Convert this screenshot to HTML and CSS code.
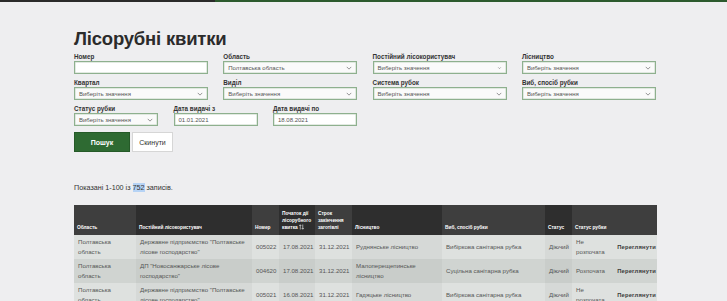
FILE: index.html
```html
<!DOCTYPE html>
<html lang="uk">
<head>
<meta charset="utf-8">
<link rel="stylesheet" href="styles.css">
</head>
<body>
<div class="topbar"><div class="topbar-dark"></div><div class="topbar-green"></div></div>
<main class="page">
  <h1 class="title">Лісорубні квитки</h1>
  <form class="filters">
    <div class="grid4">
      <label class="field"><span class="label">Номер</span><span class="input"></span></label>
      <label class="field"><span class="label">Область</span><span class="input select">Полтавська область<svg class="chev" viewBox="0 0 8 5"><path d="M1 1l3 3 3-3" /></svg></span></label>
      <label class="field"><span class="label">Постійний лісокористувач</span><span class="input select">Виберіть значення<svg class="chev small" viewBox="0 0 8 5"><path d="M2 1.5l2 2 2-2" /></svg></span></label>
      <label class="field"><span class="label">Лісництво</span><span class="input select">Виберіть значення<svg class="chev" viewBox="0 0 8 5"><path d="M1 1l3 3 3-3" /></svg></span></label>
      <label class="field"><span class="label">Квартал</span><span class="input select">Виберіть значення<svg class="chev" viewBox="0 0 8 5"><path d="M1 1l3 3 3-3" /></svg></span></label>
      <label class="field"><span class="label">Виділ</span><span class="input select">Виберіть значення<svg class="chev" viewBox="0 0 8 5"><path d="M1 1l3 3 3-3" /></svg></span></label>
      <label class="field"><span class="label">Система рубок</span><span class="input select">Виберіть значення<svg class="chev" viewBox="0 0 8 5"><path d="M1 1l3 3 3-3" /></svg></span></label>
      <label class="field"><span class="label">Виб, спосіб рубки</span><span class="input select">Виберіть значення<svg class="chev" viewBox="0 0 8 5"><path d="M1 1l3 3 3-3" /></svg></span></label>
    </div>
    <div class="grid3">
      <label class="field"><span class="label">Статус рубки</span><span class="input select">Виберіть значення<svg class="chev" viewBox="0 0 8 5"><path d="M1 1l3 3 3-3" /></svg></span></label>
      <label class="field"><span class="label">Дата видачі з</span><span class="input">01.01.2021</span></label>
      <label class="field"><span class="label">Дата видачі по</span><span class="input">18.08.2021</span></label>
    </div>
    <div class="buttons">
      <button type="button" class="btn btn-primary">Пошук</button>
      <button type="button" class="btn btn-secondary">Скинути</button>
    </div>
  </form>
  <p class="summary">Показані 1-100 із <span class="hl">752</span> записів.</p>
  <table class="results">
    <colgroup>
      <col class="c1"><col class="c2"><col class="c3"><col class="c4"><col class="c5"><col class="c6"><col class="c7"><col class="c8"><col class="c9"><col class="c10">
    </colgroup>
    <thead>
      <tr>
        <th>Область</th>
        <th class="dk">Постійний лісокористувач</th>
        <th>Номер</th>
        <th class="dk">Початок дії лісорубного квитка <svg class="sort" viewBox="0 0 6 7"><path d="M1.5 6.5V1M0.3 2.2L1.5 0.8 2.7 2.2M4.5 0.5V6M3.3 4.8L4.5 6.2 5.7 4.8" /></svg></th>
        <th>Строк закінчення заготівлі</th>
        <th class="dk">Лісництво</th>
        <th>Виб, спосіб рубки</th>
        <th class="dk">Статус</th>
        <th colspan="2">Статус рубки</th>
      </tr>
    </thead>
    <tbody>
      <tr>
        <td>Полтавська область</td>
        <td class="dk">Державне підприємство "Полтавське лісове господарство"</td>
        <td>005022</td>
        <td class="dk">17.08.2021</td>
        <td>31.12.2021</td>
        <td class="dk">Руднянське лісництво</td>
        <td>Вибіркова санітарна рубка</td>
        <td class="dk">Діючий</td>
        <td>Не розпочата</td>
        <td class="act">Переглянути</td>
      </tr>
      <tr>
        <td>Полтавська область</td>
        <td class="dk">ДП "Новосанжарське лісове господарство"</td>
        <td>004620</td>
        <td class="dk">17.08.2021</td>
        <td>31.12.2021</td>
        <td class="dk">Малоперещепинське лісництво</td>
        <td>Суцільна санітарна рубка</td>
        <td class="dk">Діючий</td>
        <td>Розпочата</td>
        <td class="act">Переглянути</td>
      </tr>
      <tr>
        <td>Полтавська область</td>
        <td class="dk">Державне підприємство "Полтавське лісове господарство"</td>
        <td>005021</td>
        <td class="dk">16.08.2021</td>
        <td>31.12.2021</td>
        <td class="dk">Гадяцьке лісництво</td>
        <td>Вибіркова санітарна рубка</td>
        <td class="dk">Діючий</td>
        <td>Не розпочата</td>
        <td class="act">Переглянути</td>
      </tr>
    </tbody>
  </table>
</main>
</body>
</html>
```

FILE: styles.css
```css
* { box-sizing: border-box; }
html, body { margin: 0; padding: 0; }
body {
  background: #eeeef0;
  font-family: "Liberation Sans", Arial, sans-serif;
  color: #333;
  overflow: hidden;
}
.topbar { display: flex; height: 2px; }
.topbar-dark { width: 215px; background: #2a2a2a; }
.topbar-green { flex: 1; background: #2c5a2e; }

.page { padding: 0 70px 0 74px; }
.title {
  margin: 26px 0 0;
  font-size: 18.5px;
  line-height: 22px;
  font-weight: bold;
  color: #2b2b2b;
  letter-spacing: -0.2px;
}
.filters { margin-top: 3px; }
.grid4 {
  display: grid;
  grid-template-columns: repeat(4, 134px);
  column-gap: 15.3px;
  row-gap: 5px;
}
.grid3 {
  display: grid;
  grid-template-columns: repeat(3, 84px);
  column-gap: 15.5px;
  margin-top: 5px;
}
.field { display: flex; flex-direction: column; }
.label {
  font-size: 6.3px;
  line-height: 7px;
  font-weight: bold;
  color: #333;
  margin-bottom: 1px;
}
.input {
  position: relative;
  display: flex;
  align-items: center;
  height: 13px;
  border: 1px solid #8eb08e;
  box-shadow: inset 0 0 0 0.5px #c5d6c5;
  background: #fff;
  padding: 0 4px;
  font-size: 6px;
  color: #555;
}
.select { background: #fafafa; }
.chev {
  position: absolute;
  right: 4px;
  top: 4px;
  width: 6px;
  height: 4px;
  fill: none;
  stroke: #666;
  stroke-width: 0.9;
}
.chev.small { width: 5px; }

.buttons { display: flex; gap: 2px; margin-top: 6px; }
.btn {
  height: 20px;
  font-family: inherit;
  font-size: 7px;
  padding: 0;
  margin: 0;
  cursor: pointer;
}
.btn-primary {
  width: 56px;
  background: #2e6a32;
  color: #fff;
  font-weight: bold;
  border: 1px solid #255a28;
}
.btn-secondary {
  width: 41px;
  background: #fff;
  color: #333;
  border: 1px solid #d6d6d6;
}

.summary {
  margin: 31px 0 0;
  font-size: 7.2px;
  line-height: 10px;
  color: #333;
}
.hl { background: #b6d3f5; }

.results {
  margin-top: 12px;
  width: 583px;
  border-collapse: collapse;
  table-layout: fixed;
}
.c1 { width: 62px; } .c2 { width: 116px; } .c3 { width: 27px; } .c4 { width: 36px; }
.c5 { width: 37px; } .c6 { width: 90px; } .c7 { width: 103px; } .c8 { width: 27px; }
.c9 { width: 41px; } .c10 { width: 44px; }
.results th {
  background: #3e3e3e;
  color: #fff;
  font-size: 4.8px;
  line-height: 7px;
  font-weight: bold;
  text-align: left;
  vertical-align: bottom;
  padding: 0 3px 4px;
  height: 30px;
}
.results th.dk { background: #2e2e2e; }
.sort {
  display: inline-block;
  width: 5px;
  height: 6px;
  vertical-align: -1px;
  fill: none;
  stroke: #fff;
  stroke-width: 0.7;
}
.results td {
  font-size: 6.1px;
  line-height: 10px;
  color: #555;
  padding: 0 4px;
  height: 24px;
  vertical-align: middle;
}
.results tbody tr:nth-child(odd) td { background: #dee1df; }
.results tbody tr:nth-child(even) td { background: #d0d4d1; }
.results tbody tr:nth-child(odd) td.dk { background: #d6d9d7; }
.results tbody tr:nth-child(even) td.dk { background: #c9cdca; }
.results td.act {
  font-weight: bold;
  font-size: 5.8px;
  color: #3a3a3a;
  letter-spacing: 0.2px;
  text-align: right;
  padding: 0 1px 0 0;
  white-space: nowrap;
}
```
